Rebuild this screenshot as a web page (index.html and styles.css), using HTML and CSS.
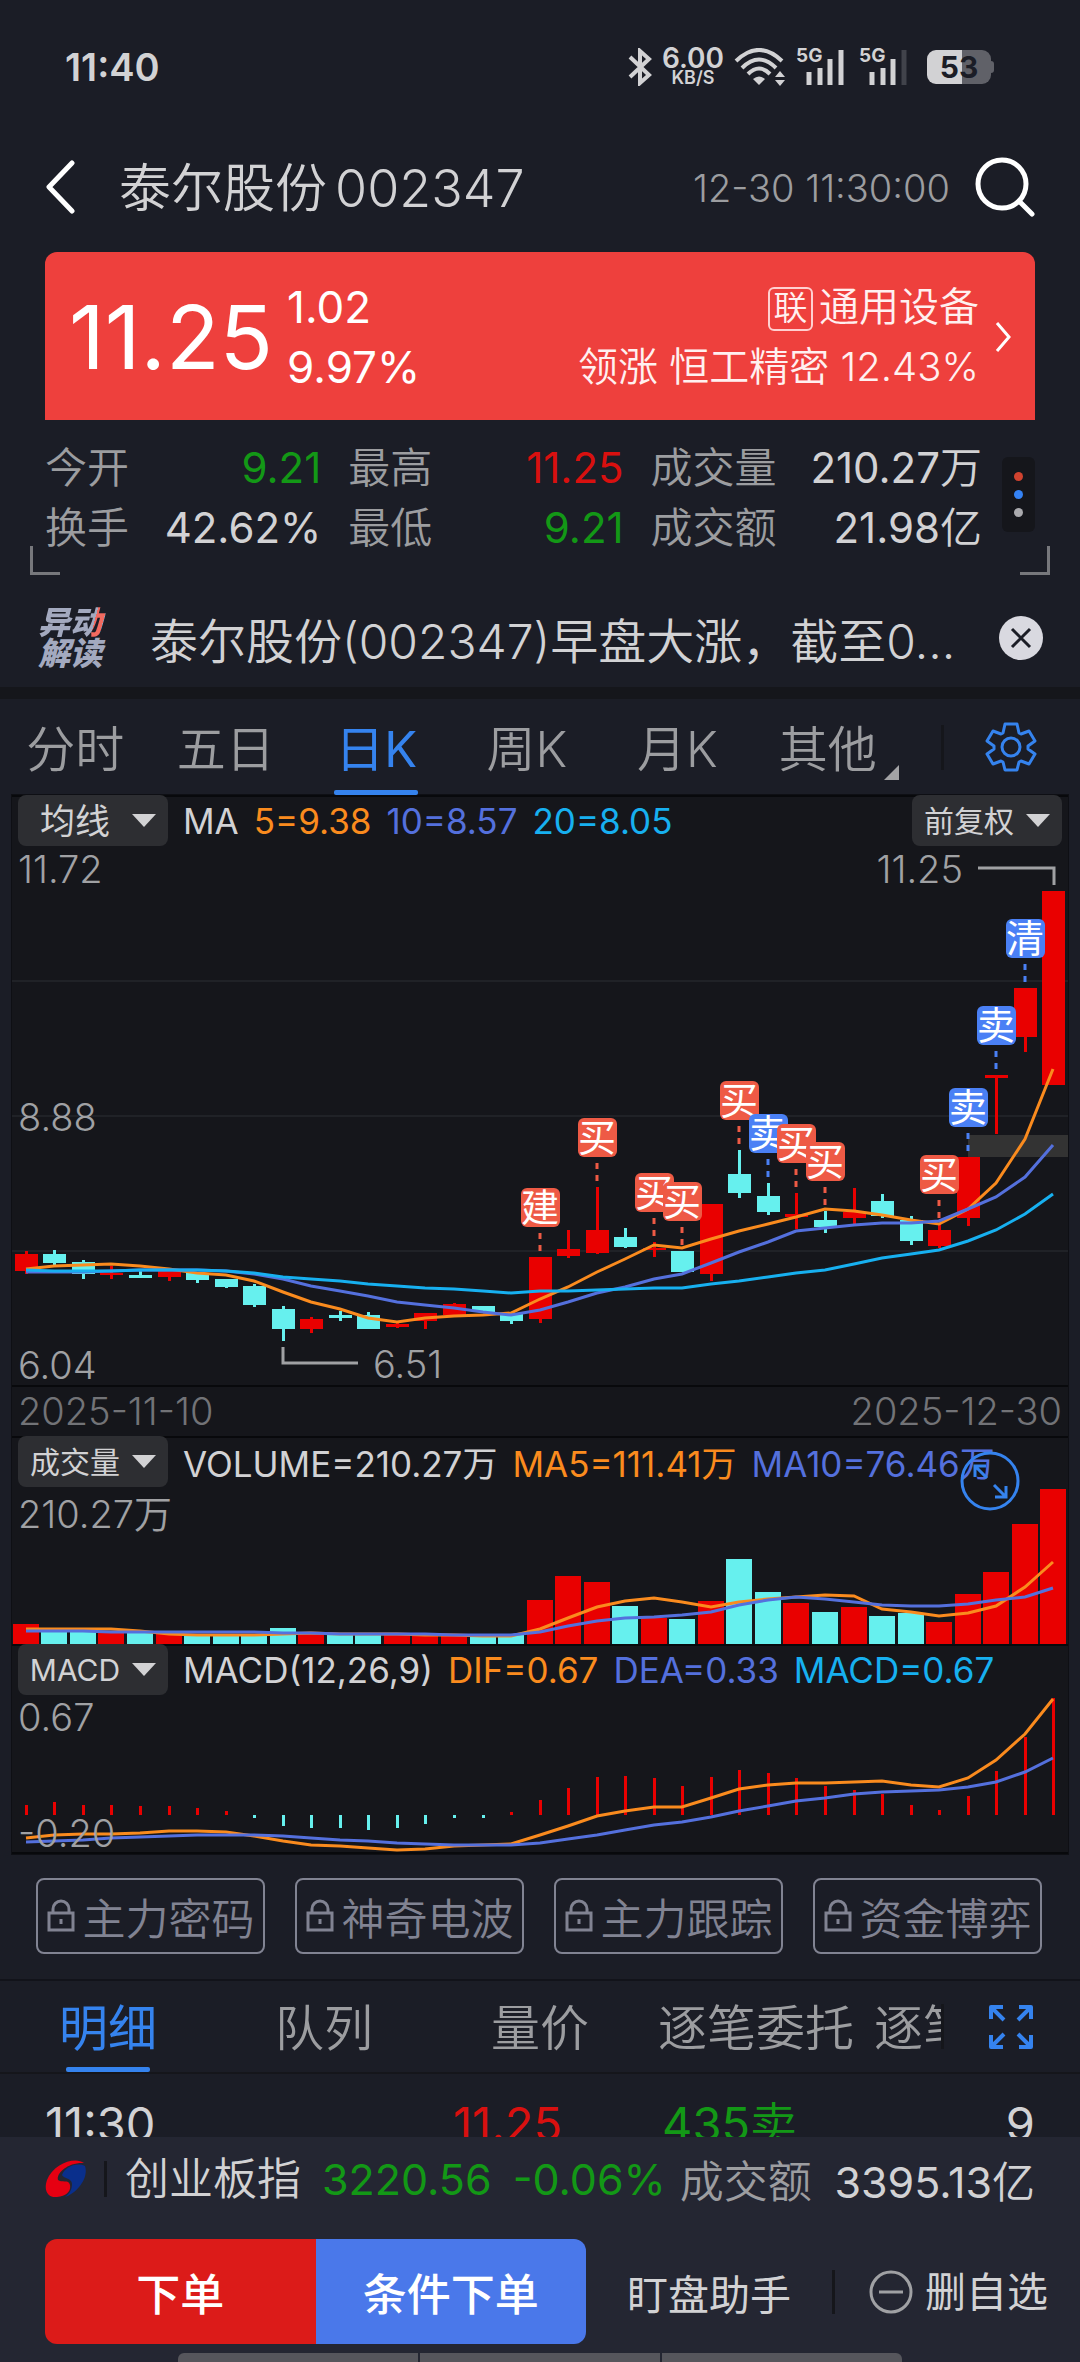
FILE: index.html
```html
<!DOCTYPE html>
<html lang="zh-CN">
<head>
  <meta charset="UTF-8" />
  <meta name="viewport" content="width=device-width, initial-scale=1" />
  <title>泰尔股份 002347</title>
  <link rel="stylesheet" href="styles.css">
</head>
<body>
<div class="statusbar">
  <span class="clock">11:40</span>
  <div class="status-icons">
    <svg class="bt" width="24" height="38" viewBox="0 0 24 38"><path d="M2 9 L21 27 L12 35 V3 L21 11 L2 29"/></svg>
    <div class="speed"><b>6.00</b><small>KB/S</small></div>
    <svg class="wifi" width="52" height="38" viewBox="0 0 52 38">
      <path d="M2 13 Q25 -9 48 13"/><path d="M8 20 Q25 3 42 20"/><path d="M14 26 Q25 15 36 26"/>
      <path class="fill" d="M19 31 Q25 26 31 31 L25 37 Z"/><path class="fill" d="M46 23 L51 29 H41 Z M41 32 H51 L46 38 Z"/>
    </svg>
    <div class="signal">
      <span>5G</span>
      <svg width="50" height="38" viewBox="0 0 50 38"><path d="M13 24V37M24 20V37M34 11V37M45 2V37"/></svg>
    </div>
    <div class="signal">
      <span>5G</span>
      <svg width="50" height="38" viewBox="0 0 50 38"><path d="M13 24V37M24 20V37M34 11V37"/><path class="off" d="M45 2V37"/></svg>
    </div>
    <div class="battery">53</div>
  </div>
</div>

<header class="topbar">
  <button class="icon-btn back" aria-label="返回">
    <svg width="30" height="54" viewBox="0 0 30 54"><path d="M27 3 L4 27 L27 51"/></svg>
  </button>
  <h1>泰尔股份<span>002347</span></h1>
  <time>12-30 11:30:00</time>
  <button class="icon-btn search" aria-label="搜索">
    <svg width="62" height="62" viewBox="0 0 62 62"><circle cx="28" cy="28" r="24"/><path d="M45 45 L58 58"/></svg>
  </button>
</header>

<a class="quote" href="#sector">
  <strong>11.25</strong>
  <div class="change"><span>1.02</span><span>9.97%</span></div>
  <div class="sector">
    <div><i>联</i>通用设备</div>
    <div>领涨 恒工精密 <span>12.43%</span></div>
  </div>
  <svg width="16" height="34" viewBox="0 0 16 34"><path d="M2 3 L14 17 L2 31"/></svg>
</a>

<section class="stats">
  <dl>
    <div><dt>今开</dt><dd class="down">9.21</dd></div>
    <div><dt>最高</dt><dd class="up">11.25</dd></div>
    <div><dt>成交量</dt><dd>210.27<em>万</em></dd></div>
    <div><dt>换手</dt><dd>42.62%</dd></div>
    <div><dt>最低</dt><dd class="down">9.21</dd></div>
    <div><dt>成交额</dt><dd>21.98<em>亿</em></dd></div>
  </dl>
  <button class="more" aria-label="更多"><i></i><i></i><i></i></button>
</section>

<div class="news">
  <span class="news-logo"><span>异动</span><span>解读</span></span>
  <a href="#news">泰尔股份(002347)早盘大涨，截至0...</a>
  <button aria-label="关闭">
    <svg width="46" height="46" viewBox="0 0 46 46"><circle cx="23" cy="23" r="22"/><path d="M14 14 L32 32 M32 14 L14 32"/></svg>
  </button>
</div>

<nav class="tabs period">
  <button>分时</button>
  <button>五日</button>
  <button class="active">日K</button>
  <button>周K</button>
  <button>月K</button>
  <button class="other">其他</button>
  <button class="tool" aria-label="设置">
    <svg width="52" height="52" viewBox="0 0 52 52">
      <path d="M20 3 H32 L34 12 L36 13 L44 10 L50 20 L43 25 V28 L50 33 L44 43 L36 40 L34 41 L32 49 H20 L18 41 L16 40 L8 43 L2 33 L9 28 V25 L2 20 L8 10 L16 13 L18 12 Z"/>
      <circle cx="26" cy="26" r="9"/>
    </svg>
  </button>
</nav>

<main class="charts">
  <section class="panel">
    <div class="panel-head">
      <label class="drop main"><select aria-label="主图指标"><option>均线</option></select></label>
      <span>MA</span><span class="c5">5=9.38</span><span class="c10">10=8.57</span><span class="c20">20=8.05</span>
      <label class="drop right"><select aria-label="复权"><option>前复权</option></select></label>
    </div>
    <svg id="price" viewBox="0 51 1056 539"></svg>
  </section>
  <div class="dates"><span>2025-11-10</span><span>2025-12-30</span></div>
  <section class="panel">
    <div class="panel-head">
      <label class="drop"><select aria-label="副图一"><option>成交量</option></select></label>
      <span>VOLUME=210.27万</span><span class="c5">MA5=111.41万</span><span class="c10">MA10=76.46万</span>
    </div>
    <svg id="volume" viewBox="0 51 1056 157"></svg>
    <button class="enlarge" aria-label="放大">
      <svg width="60" height="60" viewBox="0 0 60 60"><circle cx="30" cy="30" r="28"/><path d="M15 26 V15 H26 M15 15 L27 27 M34 34 L46 46 M46 35 V46 H35"/></svg>
    </button>
  </section>
  <section class="panel">
    <div class="panel-head">
      <label class="drop"><select aria-label="副图二"><option>MACD</option></select></label>
      <span>MACD(12,26,9)</span><span class="c5">DIF=0.67</span><span class="c10">DEA=0.33</span><span class="c20">MACD=0.67</span>
    </div>
    <svg id="macd" viewBox="0 51 1056 157"></svg>
  </section>
</main>

<div class="locked">
  <button><svg width="28" height="34" viewBox="0 0 28 34"><path d="M2 14H26V31H2Z M6 14V10A8 8 0 0 1 22 10V14 M14 20V25"/></svg>主力密码</button>
  <button><svg width="28" height="34" viewBox="0 0 28 34"><path d="M2 14H26V31H2Z M6 14V10A8 8 0 0 1 22 10V14 M14 20V25"/></svg>神奇电波</button>
  <button><svg width="28" height="34" viewBox="0 0 28 34"><path d="M2 14H26V31H2Z M6 14V10A8 8 0 0 1 22 10V14 M14 20V25"/></svg>主力跟踪</button>
  <button><svg width="28" height="34" viewBox="0 0 28 34"><path d="M2 14H26V31H2Z M6 14V10A8 8 0 0 1 22 10V14 M14 20V25"/></svg>资金博弈</button>
</div>

<nav class="tabs detail">
  <div class="scroll">
    <button class="active">明细</button>
    <button>队列</button>
    <button>量价</button>
    <button>逐笔委托</button>
    <button>逐笔成交</button>
  </div>
  <button class="tool" aria-label="全屏">
    <svg width="44" height="44" viewBox="0 0 44 44"><path d="M2 14V2H14M2 2L15 15 M30 2H42V14M42 2L29 15 M2 30V42H14M2 42L15 29 M30 42H42V30M42 42L29 29"/></svg>
  </button>
</nav>

<div class="ticks">
  <table>
    <tr><td>11:30</td><td class="up">11.25</td><td class="down">435<em>卖</em></td><td>9</td></tr>
  </table>
</div>

<footer>
  <a class="index" href="#index">
    <svg width="42" height="42" viewBox="0 0 42 42">
      <path class="r" d="M39 5 C30 -2 8 6 2 22 C-2 34 4 40 12 39 C22 38 26 33 25 27 C24 21 16 25 13 22 C11 16 22 4 39 5 Z"/>
      <path class="b" d="M40 8 C31 4 20 9 17 17 C19 21 27 20 27 26 C27 32 24 36 20 39 C32 35 44 20 40 8 Z"/>
    </svg>
    <span class="name">创业板指</span>
    <span class="down">3220.56</span>
    <span class="down">-0.06%</span>
    <span class="label">成交额</span>
    <span class="amount">3395.13<em>亿</em></span>
  </a>
  <div class="actions">
    <button class="order">下单</button>
    <button class="cond">条件下单</button>
    <button class="plain">盯盘助手</button>
    <button class="plain remove">
      <svg width="44" height="44" viewBox="0 0 44 44"><circle cx="22" cy="22" r="20"/><path d="M10 22H34"/></svg>删自选
    </button>
  </div>
  <div class="handle"><i></i><i></i><i></i></div>
</footer>
<script src="chart.js"></script>
</body>
</html>
```

FILE: styles.css
```css
* {
  box-sizing: border-box;
}
body {
  margin: 0;
  height: 100vh;
  display: flex;
  flex-direction: column;
  overflow: hidden;
  background: #1b1d26;
  color: #d2d2d4;
  font-family: Inter, "Noto Sans CJK SC", sans-serif;
  font-size: 42px;
  font-weight: 350;
}
body > * {
  flex: none;
}
button,
select {
  font: inherit;
  color: inherit;
  background: none;
  border: 0;
  padding: 0;
  margin: 0;
}
a {
  color: inherit;
  text-decoration: none;
}
svg {
  display: block;
  fill: none;
  flex: none;
}
em,
i {
  font-style: normal;
}
em {
  font-weight: 350;
}
.up {
  color: #d9100f;
}
.down {
  color: #139816;
}

/* status bar */
.statusbar {
  display: flex;
  justify-content: space-between;
  align-items: center;
  height: 134px;
  padding: 0 89px 0 65px;
}
.clock {
  font-size: 38px;
  font-weight: 600;
}
.status-icons {
  display: flex;
  align-items: center;
  gap: 10px;
}
.bt,
.wifi,
.signal svg {
  stroke: #d2d2d4;
  stroke-width: 4;
}
.wifi .fill {
  fill: #d2d2d4;
  stroke: none;
}
.speed {
  display: flex;
  flex-direction: column;
  align-items: center;
  line-height: 20px;
}
.speed b {
  font-size: 28px;
  font-weight: 600;
  line-height: 22px;
}
.speed small {
  font-size: 18px;
  font-weight: 600;
  line-height: 18px;
}
.signal {
  position: relative;
}
.signal span {
  position: absolute;
  top: 0;
  left: 0;
  font-size: 19px;
  font-weight: 700;
  line-height: 16px;
}
.signal svg {
  stroke-width: 5;
}
.signal .off {
  stroke: #41434b;
}
.signal + .signal {
  margin-left: 3px;
}
.battery {
  position: relative;
  margin-left: 8px;
  width: 64px;
  height: 34px;
  border-radius: 9px;
  background: linear-gradient(90deg, #d2d2d4 55%, #606168 55%);
  color: #1b1d26;
  font-size: 30px;
  font-weight: 700;
  line-height: 34px;
  text-align: center;
}
.battery::after {
  content: "";
  position: absolute;
  left: 64px;
  top: 11px;
  width: 3px;
  height: 12px;
  border-radius: 0 3px 3px 0;
  background: #606168;
}

/* title */
.topbar {
  display: flex;
  align-items: center;
  height: 106px;
  padding: 0 44px 0 45px;
}
.topbar svg {
  stroke: #fff;
  stroke-width: 5;
  stroke-linecap: round;
  stroke-linejoin: round;
}
.topbar h1 {
  flex: 1;
  margin: 4px 0 0 44px;
  font-size: 52px;
  font-weight: 350;
  line-height: 60px;
}
.topbar h1 span {
  margin-left: 8px;
}
.topbar time {
  color: #9c9da0;
  font-size: 38px;
  margin: 2px 24px 0 0;
}

/* red quote card */
.quote {
  display: flex;
  align-items: center;
  height: 168px;
  margin: 12px 45px 0;
  padding: 2px 24px 0;
  border-radius: 12px 12px 0 0;
  background: #ee403d;
  color: #fff;
}
.quote strong {
  font-size: 88px;
  font-weight: 400;
}
.change {
  display: flex;
  flex-direction: column;
  margin-left: 14px;
  font-size: 44px;
  font-weight: 400;
  line-height: 60px;
}
.sector {
  flex: 1;
  text-align: right;
  font-size: 40px;
  line-height: 60px;
  color: #fff0f0;
}
.sector i {
  display: inline-block;
  width: 45px;
  height: 44px;
  margin-right: 6px;
  border: 2px solid #ffd0d0;
  border-radius: 6px;
  font-size: 34px;
  line-height: 38px;
  text-align: center;
  vertical-align: 1px;
}
.quote svg {
  margin-left: 16px;
  stroke: #fff;
  stroke-width: 3;
}

/* stats */
.stats {
  position: relative;
  display: flex;
  align-items: center;
  margin: 0 30px;
  padding: 18px 15px 17px;
  height: 155px;
}
.stats::before,
.stats::after {
  content: "";
  position: absolute;
  bottom: 0;
  width: 27px;
  height: 26px;
  border: solid #77787c;
}
.stats::before {
  left: 0;
  border-width: 0 0 3px 3px;
}
.stats::after {
  right: 0;
  border-width: 0 3px 3px 0;
}
.stats dl {
  flex: 1;
  display: grid;
  grid-template-columns: 276fr 275fr 331fr;
  column-gap: 27px;
  margin: 0 20px 0 0;
  line-height: 60px;
}
.stats dl div {
  display: flex;
  justify-content: space-between;
}
.stats dt {
  color: #9c9da0;
}
.stats dd {
  margin: 0;
  font-weight: 400;
}
.more {
  display: flex;
  flex-direction: column;
  align-items: center;
  justify-content: center;
  gap: 9px;
  width: 33px;
  height: 75px;
  margin-bottom: 8px;
  border-radius: 6px;
  background: #15161b;
}
.more i {
  width: 9px;
  height: 9px;
  border-radius: 50%;
  background: #aaaaae;
}
.more i:nth-child(1) {
  background: #d0432f;
}
.more i:nth-child(2) {
  background: #3583f5;
}

/* news */
.news {
  display: flex;
  align-items: center;
  height: 124px;
  padding: 14px 36px 0 38px;
  border-bottom: 12px solid #15161b;
}
.news-logo {
  width: 70px;
  font-size: 32px;
  font-weight: 900;
  font-style: italic;
  line-height: 31px;
  color: #a3a9bf;
}
.news-logo span {
  display: block;
}
.news-logo span:first-child {
  background: linear-gradient(105deg, #a3a9bf 77%, #f26a60 77%, #f26a60 88%, #a3a9bf 88%);
  background-clip: text;
  color: transparent;
}
.news a {
  flex: 1;
  margin: 0 0 0 42px;
  font-size: 48px;
  white-space: nowrap;
}
.news circle {
  fill: #d9d9e0;
}
.news path {
  stroke: #1b1d26;
  stroke-width: 3;
}

/* tabs */
.tabs {
  display: flex;
  color: #9c9da0;
  font-size: 49px;
  height: 96px;
}
.tabs button {
  position: relative;
  padding-bottom: 4px;
  white-space: nowrap;
}
.tabs .active {
  color: #3583ee;
  font-weight: 400;
}
.tabs .active::after {
  content: "";
  position: absolute;
  bottom: 0;
  left: 50%;
  width: 84px;
  height: 5px;
  margin-left: -42px;
  border-radius: 2px;
  background: #3583ee;
}
.tabs .tool {
  width: 139px;
  display: flex;
  align-items: center;
  justify-content: center;
  padding: 0;
}
.tabs .tool::before {
  content: "";
  position: absolute;
  left: 0;
  width: 3px;
  height: 45px;
  background: #15161b;
}
.tool svg {
  stroke: #3583ee;
  stroke-width: 3;
  stroke-linejoin: round;
}
.period button {
  flex: 1;
}
.period .tool {
  flex: none;
}
.period .other {
  margin-right: 38px;
}
.period .other::after {
  content: "";
  position: absolute;
  right: 4px;
  bottom: 15px;
  border-left: 15px solid transparent;
  border-bottom: 15px solid #a3a3a5;
}

/* charts */
.charts {
  margin: 0 12px;
  background: #15161b;
  border-bottom: 2px solid #08090c;
  box-shadow: 0 0 0 1px #0e0f14;
}
.panel {
  position: relative;
  border-top: 2px solid #08090c;
}
.panel > svg {
  width: 100%;
}
.panel-head {
  display: flex;
  align-items: center;
  gap: 15px;
  height: 49px;
  padding: 0 6px 2px;
  font-size: 35px;
  font-weight: 400;
  white-space: nowrap;
}
.drop {
  position: relative;
  width: 150px;
  height: 51px;
  flex: none;
}
.drop::after {
  content: "";
  position: absolute;
  right: 12px;
  top: 19px;
  border: 12px solid transparent;
  border-top: 13px solid #d2d2d4;
  border-bottom: 0;
}
.drop select {
  appearance: none;
  width: 100%;
  height: 100%;
  padding-right: 36px;
  border-radius: 8px;
  background: #2d2e32;
  font-size: 30px;
  text-align: center;
}
.drop.main select {
  font-size: 35px;
}
.drop.right {
  margin-left: auto;
}
.c5 {
  color: #fa8b1e;
}
.c10 {
  color: #5470dd;
}
.c20 {
  color: #17b0f0;
}
.dates {
  display: flex;
  justify-content: space-between;
  padding: 0 6px;
  line-height: 49px;
  border-top: 2px solid #08090c;
  color: #727377;
  font-size: 38px;
}
.enlarge {
  position: absolute;
  right: 48px;
  top: 13px;
}
.enlarge svg {
  stroke: #3583ee;
  stroke-width: 3;
}

.grid {
  stroke: #202227;
  stroke-width: 2;
}
.axis {
  fill: #a0a1a4;
  font-size: 38px;
}
.callout {
  stroke: #a0a1a4;
  stroke-width: 3;
}
.zone {
  fill: #333;
}
.rise {
  fill: #e90000;
}
.fall {
  fill: #66f0ee;
}
.line {
  stroke-width: 3;
}
.line.l5 {
  stroke: #fa8b1e;
}
.line.l10 {
  stroke: #5470dd;
}
.line.l20 {
  stroke: #17b0f0;
}
.buy rect {
  fill: #ee5a45;
}
.sell rect {
  fill: #4a80f5;
}
.buy path,
.sell path {
  stroke-width: 3;
  stroke-dasharray: 6 6;
}
.buy path {
  stroke: #ee5a45;
}
.sell path {
  stroke: #4a80f5;
}
.buy text,
.sell text {
  fill: #fff;
  font-size: 38px;
  font-weight: 400;
  text-anchor: middle;
}

/* locked indicators */
.locked {
  display: grid;
  grid-template-columns: repeat(4, 1fr);
  gap: 30px;
  padding: 24px 38px 25px 36px;
  border-bottom: 2px solid #12131a;
}
.locked button {
  display: flex;
  align-items: center;
  justify-content: center;
  gap: 8px;
  height: 76px;
  border: 2px solid #818392;
  border-radius: 8px;
  color: #818392;
  font-size: 43px;
  white-space: nowrap;
}
.locked svg {
  stroke: #818392;
  stroke-width: 3;
}

/* detail tabs */
.detail {
  height: 93px;
  border-bottom: 2px solid #15161b;
}
.detail .scroll {
  flex: 1;
  display: flex;
  overflow: hidden;
}
.detail .scroll button {
  flex: none;
  width: 216px;
}
.detail .tool svg {
  stroke-width: 4;
}
.ticks {
  flex: 1 1 0;
  overflow: hidden;
  min-height: 0;
}
.ticks table {
  width: 100%;
  border-collapse: collapse;
  table-layout: fixed;
  font-size: 47px;
  font-weight: 400;
  line-height: 60px;
}
.ticks td {
  padding: 20px 0 0;
  text-align: right;
}
.ticks td:first-child {
  width: 250px;
  padding-left: 45px;
  text-align: left;
}
.ticks td:nth-child(2) {
  width: 312px;
}
.ticks td:nth-child(3) {
  width: 235px;
}
.ticks td:last-child {
  padding-right: 45px;
}

/* bottom bar */
footer {
  background: #242632;
}
.index {
  display: flex;
  align-items: center;
  height: 84px;
  padding: 0 45px;
  font-size: 43px;
  font-weight: 400;
  white-space: nowrap;
}
.index .r {
  fill: #e60012;
}
.index .b {
  fill: #0a2f8c;
}
.index .name {
  margin: 0 21px 0 17px;
  padding-left: 18px;
  border-left: 3px solid #15161b;
  line-height: 36px;
  font-size: 44px;
  font-weight: 350;
}
.index .down + .down {
  margin: 0 14px 0 21px;
}
.index .label {
  color: #9c9da0;
  font-size: 44px;
  font-weight: 350;
}
.index .amount {
  margin-left: auto;
}
.actions {
  display: flex;
  align-items: center;
  margin-top: 18px;
  padding: 0 32px 0 45px;
  font-size: 44px;
}
.actions .order,
.actions .cond {
  flex: 1;
  height: 105px;
  color: #fff;
  font-weight: 500;
}
.order {
  background: #dc1b19;
  border-radius: 12px 0 0 12px;
}
.cond {
  background: #4a78ea;
  border-radius: 0 12px 12px 0;
}
.actions .plain {
  font-size: 41px;
  font-weight: 400;
  margin-left: 41px;
}
.actions .remove {
  display: flex;
  align-items: center;
  gap: 12px;
  padding-left: 34px;
  border-left: 3px solid #15161b;
  line-height: 44px;
}
.remove svg {
  stroke: #a0a1a4;
  stroke-width: 3;
}
.handle {
  display: flex;
  gap: 2px;
  height: 9px;
  margin: 9px 178px 0;
}
.handle i {
  flex: 1;
  background: #56565c;
}
.handle i:first-child {
  border-top-left-radius: 6px;
}
.handle i:last-child {
  border-top-right-radius: 6px;
}
```

FILE: chart.js
```js
const W = 1056;
const STEP = W / 37;
const cx = (i) => Math.round(STEP * i + STEP / 2 - 0.4);

// r/f, body top, body bottom, high, low
const candles = [
  ["r", 459, 476, 456, 479], ["f", 459, 468, 455, 471], ["f", 467, 479, 465, 484],
  ["r", 478, 480, 471, 484], ["f", 480, 483, 476, 483], ["r", 476, 482, 475, 486],
  ["f", 478, 485, 478, 488], ["f", 484, 492, 484, 493], ["f", 491, 510, 489, 512],
  ["f", 514, 534, 511, 546], ["r", 524, 534, 522, 538], ["f", 520, 523, 516, 526],
  ["f", 520, 534, 517, 534], ["r", 529, 532, 528, 533], ["r", 518, 526, 518, 534],
  ["r", 509, 520, 508, 520], ["f", 511, 517, 511, 517], ["f", 519, 526, 519, 529],
  ["r", 462, 524, 462, 528], ["r", 454, 461, 435, 463], ["r", 435, 458, 392, 459],
  ["f", 442, 452, 433, 453], ["r", 453, 455, 447, 462], ["f", 456, 477, 456, 477],
  ["r", 409, 479, 409, 486], ["f", 379, 398, 355, 403], ["f", 401, 417, 388, 420],
  ["r", 419, 422, 398, 434], ["f", 425, 432, 416, 438], ["r", 417, 423, 393, 429],
  ["f", 406, 421, 399, 423], ["f", 425, 446, 421, 450], ["r", 435, 451, 429, 453],
  ["r", 362, 423, 362, 431], ["r", 280, 283, 280, 339], ["r", 193, 242, 193, 257],
  ["r", 96, 290, 96, 290],
];
const ma5 = [474, 471, 470, 469, 471, 474, 478, 480, 486, 497, 507, 514, 523, 527, 523, 521, 520, 518, 504, 492, 477, 464, 450, 453, 444, 436, 429, 422, 414, 416, 420, 425, 429, 414, 388, 344, 274];
const ma10 = [477, 477, 477, 476, 475, 475, 475, 476, 479, 484, 491, 496, 501, 507, 510, 513, 517, 520, 515, 507, 498, 492, 484, 479, 468, 457, 447, 436, 433, 430, 428, 428, 426, 414, 402, 382, 350];
const ma20 = [475, 476, 476, 476, 475, 475, 475, 476, 478, 482, 484, 486, 489, 491, 493, 494, 496, 498, 496, 496, 495, 494, 493, 493, 489, 486, 482, 478, 475, 469, 463, 459, 455, 446, 435, 419, 399];
const marks = { 18: "建", 20: "买", 22: "买", 23: "买", 25: "买", 26: "卖", 27: "买", 28: "买", 32: "买", 33: "卖", 34: "卖", 35: "清" };

const volumes = [20, 13, 12, 12, 12, 10, 10, 9, 9, 16, 11, 10, 9, 9, 9, 8, 8, 10, 44, 68, 62, 38, 26, 25, 43, 85, 52, 41, 32, 37, 28, 31, 22, 50, 72, 120, 155];
const vol5 = [193, 193, 193, 193, 195, 198, 199, 199, 199, 198, 197, 198, 198, 198, 199, 199, 200, 200, 193, 182, 171, 165, 162, 166, 171, 166, 163, 161, 159, 160, 173, 176, 180, 177, 170, 151, 126];
const vol10 = [195, 195, 195, 196, 196, 196, 196, 196, 196, 197, 197, 198, 198, 198, 198, 199, 199, 199, 196, 190, 185, 182, 181, 179, 176, 169, 164, 161, 163, 166, 169, 170, 170, 168, 164, 161, 152];

const hist = [10, 13, 10, 10, 9, 9, 7, 4, -3, -11, -13, -13, -15, -13, -9, -3, -3, 3, 15, 27, 38, 39, 37, 29, 38, 45, 42, 37, 29, 25, 21, 10, 5, 19, 44, 78, 117];
const dif = [194, 191, 190, 190, 189, 187, 187, 188, 192, 197, 201, 202, 204, 206, 205, 202, 201, 200, 191, 182, 172, 167, 163, 163, 154, 145, 141, 139, 139, 138, 137, 141, 143, 134, 116, 90, 55];
const dea = [198, 197, 196, 194, 193, 192, 191, 191, 191, 192, 194, 196, 197, 199, 200, 201, 201, 201, 199, 195, 191, 186, 181, 178, 173, 167, 162, 157, 154, 150, 148, 147, 146, 143, 138, 128, 114];

const rect = (cls, x, y, w, h) => `<rect class="${cls}" x="${x}" y="${y}" width="${w}" height="${h}"/>`;
const line = (cls, ys) => `<polyline class="line ${cls}" points="${ys.map((y, i) => `${cx(i)},${y}`).join(" ")}"/>`;
const label = (x, y, t, anchor = "start") => `<text class="axis" x="${x}" y="${y}" text-anchor="${anchor}">${t}</text>`;
const tone = (c) => (c === "r" ? "rise" : "fall");

const drawPrice = () => {
  let out = [186, 321, 456].map((y) => `<path class="grid" d="M0 ${y}H${W}"/>`).join("");
  out += rect("zone", 956, 340, 100, 22);
  candles.forEach(([c, top, bottom, high, low], i) => {
    out += rect(tone(c), cx(i) - 1, high, 3, low - high);
    out += rect(tone(c), cx(i) - 11, top, 23, bottom - top);
  });
  out += line("l5", ma5) + line("l10", ma10) + line("l20", ma20);
  Object.keys(marks).forEach((i) => {
    const high = candles[i][3];
    const x = cx(+i);
    const cls = "卖清".includes(marks[i]) ? "sell" : "buy";
    out += `<g class="${cls}"><path d="M${x} ${high - 24}V${high - 5}"/>
      <rect x="${x - 19}" y="${high - 69}" width="39" height="39" rx="6"/>
      <text x="${x}" y="${high - 36}">${marks[i]}</text></g>`;
  });
  out += label(6, 88, "11.72") + label(6, 336, "8.88") + label(6, 584, "6.04");
  out += label(951, 88, "11.25", "end") + label(361, 583, "6.51");
  out += `<path class="callout" d="M966 73H1042V90M271 552V568H346"/>`;
  document.getElementById("price").innerHTML = out;
};

const drawVolume = () => {
  let out = label(6, 92, "210.27万");
  volumes.forEach((v, i) => {
    out += rect(tone(candles[i][0]), cx(i) - 13, 208 - v, 26, v);
  });
  document.getElementById("volume").innerHTML = out + line("l5", vol5) + line("l10", vol10);
};

const drawMacd = () => {
  let out = "";
  hist.forEach((v, i) => {
    out += rect(v > 0 ? "rise" : "fall", cx(i) - 1, v > 0 ? 171 - v : 171, 3, Math.abs(v));
  });
  out += line("l5", dif) + line("l10", dea);
  out += label(6, 87, "0.67") + label(6, 203, "-0.20");
  document.getElementById("macd").innerHTML = out;
};

drawPrice();
drawVolume();
drawMacd();
```
